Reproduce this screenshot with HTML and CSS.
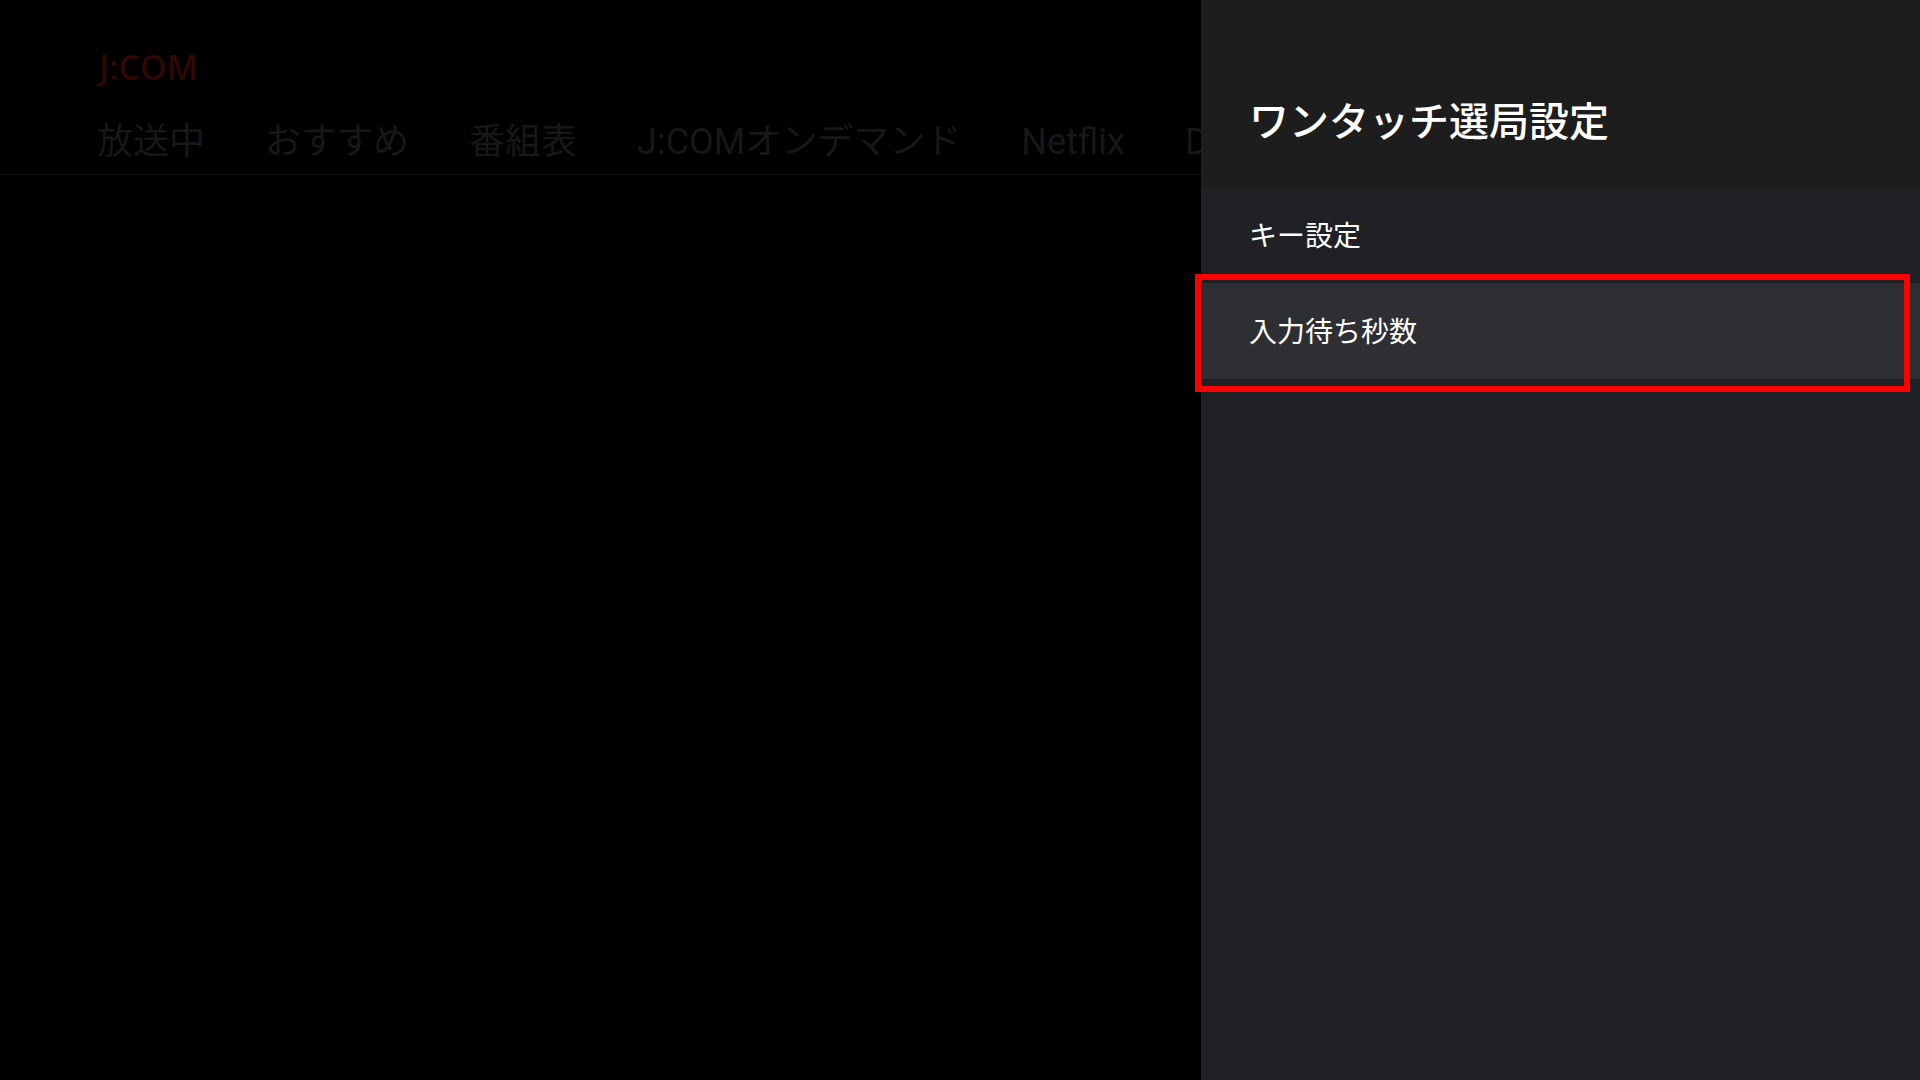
FILE: index.html
```
<!DOCTYPE html>
<html lang="ja">
<head>
    <meta charset="UTF-8">
    <title>ワンタッチ選局設定</title>
    <link rel="stylesheet" href="styles.css">
</head>
<body>
    <div class="screen">
        <main class="home">
            <div class="logo">J:COM</div>
            <nav class="tabs">
                <a href="#">放送中</a>
                <a href="#">おすすめ</a>
                <a href="#">番組表</a>
                <a href="#">J:COMオンデマンド</a>
                <a href="#">Netflix</a>
                <a href="#">D</a>
            </nav>
        </main>

        <aside class="panel">
            <header class="panel-header">
                <h1>ワンタッチ選局設定</h1>
            </header>
            <div class="menu">
                <button class="menu-item" type="button">キー設定</button>
                <button class="menu-item selected" type="button">入力待ち秒数</button>
            </div>
        </aside>
    </div>
</body>
</html>
```
FILE: styles.css
```
* {
    box-sizing: border-box;
}

body {
    margin: 0;
    background: #000;
    font-family: Roboto, "Noto Sans CJK JP", sans-serif;
    overflow: hidden;
}

.screen {
    display: flex;
    min-height: 100vh;
}

/* ホーム画面（暗転中） */
.home {
    flex: 1;
    min-width: 0;
    padding-top: 43px;
    overflow: hidden;
}

.logo {
    padding-left: 99px;
    color: #2d0805;
    font-family: "Open Sans", "Noto Sans", sans-serif;
    font-size: 34px;
    font-weight: 600;
    line-height: 48px;
}

.tabs {
    display: flex;
    gap: 60px;
    height: 84px;
    padding: 25px 0 0 97px;
    border-bottom: 1px solid #111;
    white-space: nowrap;
}

.tabs a {
    color: #171717;
    font-size: 36px;
    font-weight: 400;
    line-height: 52px;
    text-decoration: none;
}

/* 設定パネル */
.panel {
    width: 37.45%;
    background: #202124;
    color: #fff;
}

.panel-header {
    padding: 93px 48px 34px;
    background: #1d1d1e;
}

.panel-header h1 {
    margin: 0;
    font-size: 40px;
    font-weight: 500;
    line-height: 60px;
}

.menu-item {
    display: block;
    position: relative;
    width: 100%;
    height: 96px;
    padding: 0 48px 2px;
    border: 0;
    background: none;
    color: #fff;
    font-family: inherit;
    font-size: 28px;
    text-align: left;
}

.menu-item.selected {
    background: #2e2f32;
}

/* 選択中の赤枠 */
.menu-item.selected::after {
    content: "";
    position: absolute;
    top: -9px;
    right: 10px;
    bottom: -13px;
    left: -6px;
    border: 6px solid #f00;
}
```
